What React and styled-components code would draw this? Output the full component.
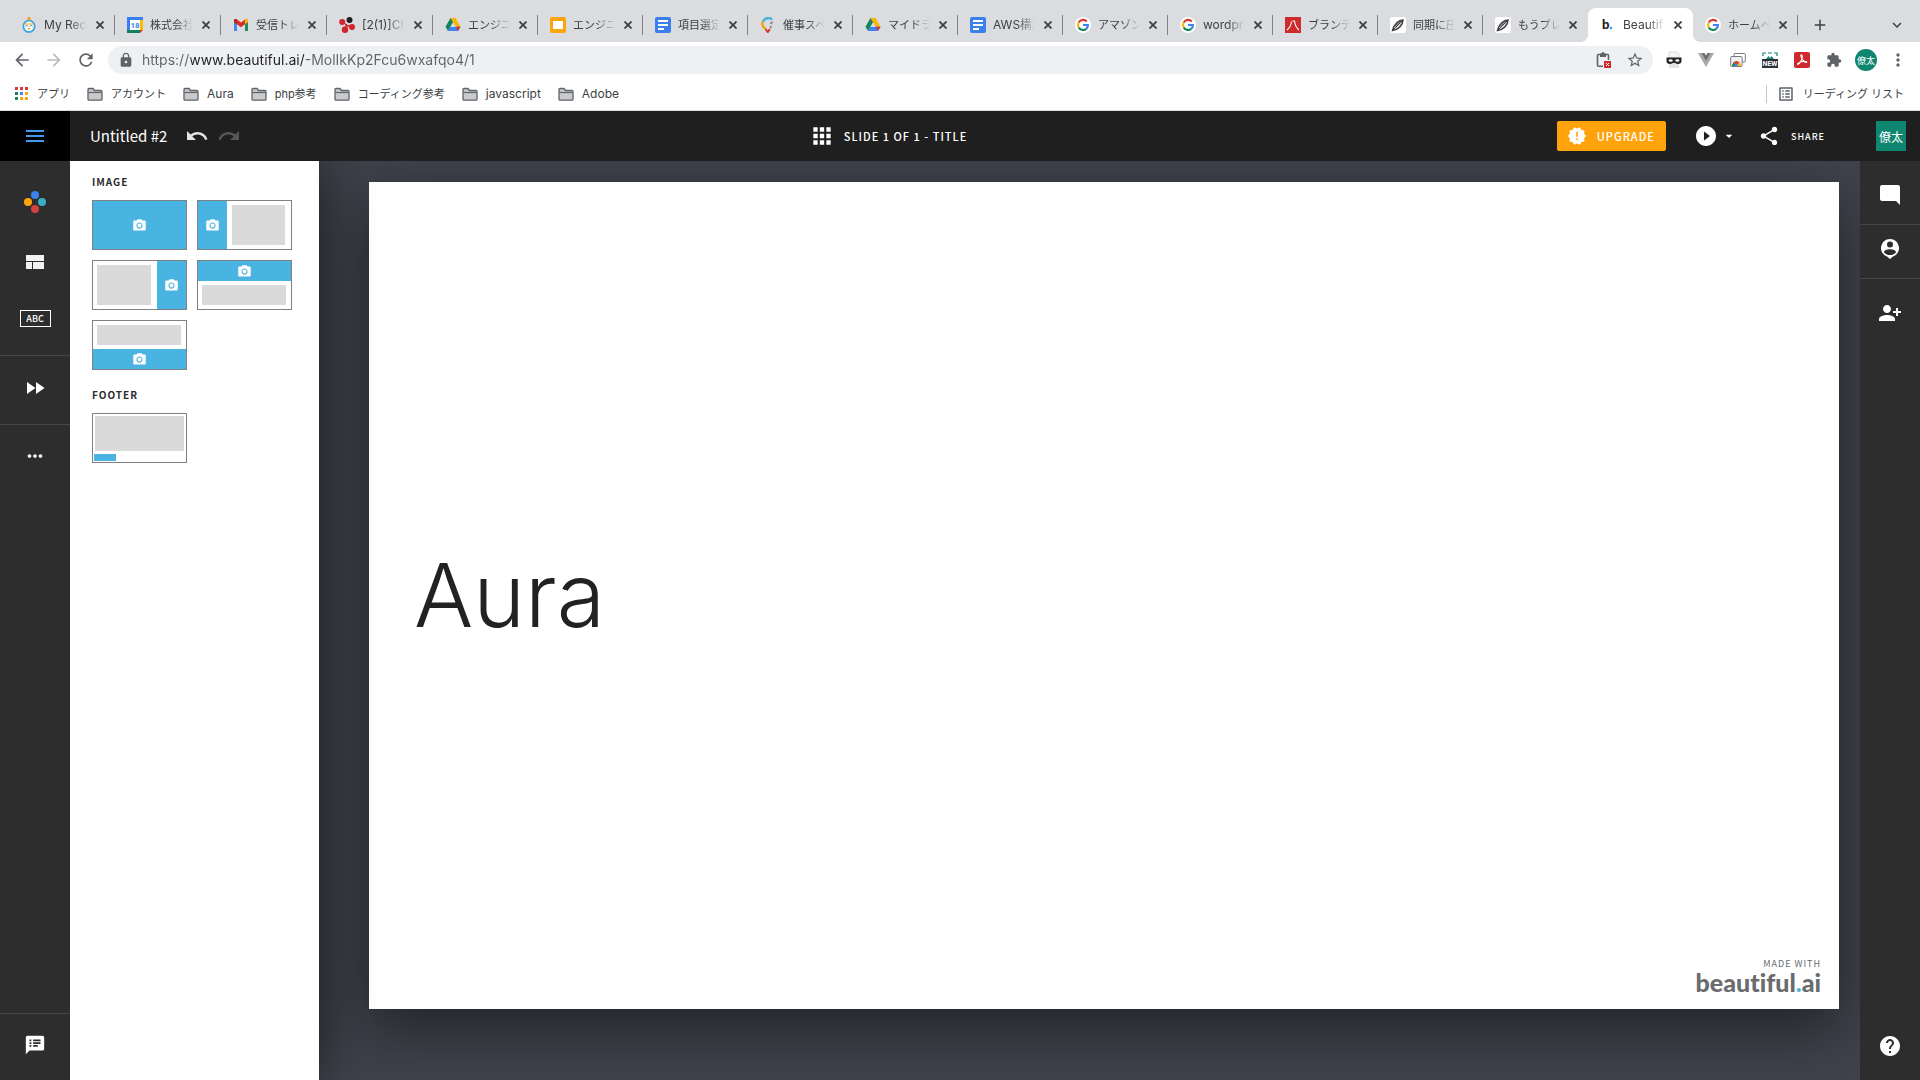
import React from 'react'
import styled, { createGlobalStyle, css } from 'styled-components'
import {
  MdAdd,
  MdApps,
  MdArrowBack,
  MdArrowDropDown,
  MdArrowForward,
  MdCameraAlt,
  MdExtension,
  MdFastForward,
  MdHelp,
  MdKeyboardArrowDown,
  MdListAlt,
  MdLock,
  MdMenu,
  MdModeComment,
  MdMoreHoriz,
  MdMoreVert,
  MdNewReleases,
  MdPersonAddAlt1,
  MdPlayCircleFilled,
  MdRedo,
  MdRefresh,
  MdShare,
  MdSpeakerNotes,
  MdStarBorder,
  MdUndo,
} from 'react-icons/md'

const colors = {
  strip: '#dadce0',
  chromeText: '#3c4043',
  chromeIcon: '#5f6368',
  omnibox: '#eff0f3',
  header: '#1f1f1f',
  sidebar: '#2d2d2d',
  divider: '#444548',
  canvas: '#40434c',
  blue: '#49b3e2',
  block: '#dadada',
  orange: '#ffa30d',
  teal: '#0f866f',
}

const uiFont = '"Inter", "Noto Sans CJK JP", sans-serif'
const appFont = '"Noto Sans CJK JP", "Noto Sans", sans-serif'

const GlobalStyle = createGlobalStyle`
  *, *::before, *::after {
    box-sizing: border-box;
  }

  body {
    margin: 0;
    font-family: ${appFont};
  }

  button {
    background: none;
    border: none;
    color: inherit;
    cursor: pointer;
    font: inherit;
    padding: 0;
  }

  svg {
    display: block;
    flex: none;
  }
`

const Page = styled.div`
  display: flex;
  flex-direction: column;
  height: 100vh;
  overflow: hidden;
`

/* Browser window */

const TabStrip = styled.div`
  align-items: flex-end;
  background-color: ${colors.strip};
  color: ${colors.chromeText};
  display: flex;
  font-family: ${uiFont};
  height: 42px;
  padding: 8px 14px 0 9px;
`

const TabList = styled.div`
  display: flex;
  flex: 0 1 1789px;
  min-width: 0;
`

const Tab = styled.div`
  align-items: center;
  display: flex;
  flex: 0 1 ${props => (props.$wide ? 106 : 105)}px;
  height: 34px;
  min-width: 0;
  padding: 0 7px 0 12px;
  position: relative;

  ${props =>
    props.$divider &&
    css`
      &::after {
        background-color: #808286;
        content: '';
        height: 20px;
        position: absolute;
        right: 0;
        top: 7px;
        width: 1px;
      }
    `};

  ${props =>
    props.$active &&
    css`
      background-color: #fff;
      border-radius: 8px 8px 0 0;

      &::before,
      &::after {
        bottom: 0;
        content: '';
        height: 8px;
        position: absolute;
        width: 8px;
      }

      &::before {
        background: radial-gradient(circle at 0 0, transparent 8px, #fff 8px);
        left: -8px;
      }

      &::after {
        background: radial-gradient(circle at 100% 0, transparent 8px, #fff 8px);
        right: -8px;
      }
    `};
`

const TabTitle = styled.span`
  flex: 1;
  font-size: ${props => (props.$latin ? 12 : 11)}px;
  line-height: 18px;
  margin: 0 5px 0 7px;
  mask-image: linear-gradient(to right, #000 calc(100% - 18px), transparent 100%);
  min-width: 0;
  white-space: nowrap;
`

const IconButton = styled.button`
  align-items: center;
  color: ${props => props.$color || colors.chromeIcon};
  display: flex;
  flex: none;
  height: ${props => props.$size || 32}px;
  justify-content: center;
  width: ${props => props.$size || 32}px;
`

const StripActions = styled.div`
  align-items: center;
  display: flex;
  flex: 1;
  height: 34px;
  justify-content: space-between;
  padding-left: 10px;
`

const Toolbar = styled.div`
  align-items: center;
  background-color: #fff;
  display: flex;
  height: 36px;
  padding: 0 6px;
`

const Omnibox = styled.label`
  align-items: center;
  background-color: ${colors.omnibox};
  border-radius: 14px;
  color: ${colors.chromeIcon};
  display: flex;
  flex: 1;
  height: 28px;
  margin: 0 5px 0 6px;
  padding: 0 2px 0 10px;
`

const Address = styled.input`
  background: linear-gradient(
    to right,
    #5f6368 49px,
    #202124 49px,
    #202124 162px,
    #5f6368 162px
  );
  background-clip: text;
  border: none;
  color: transparent;
  flex: 1;
  font-family: ${uiFont};
  font-size: 14px;
  line-height: 20px;
  margin-left: 8px;
  min-width: 0;
  outline: none;
  padding: 0;
`

const Profile = styled.span`
  align-items: center;
  background-color: ${colors.teal};
  border-radius: 50%;
  color: #fff;
  display: flex;
  font-family: ${appFont};
  font-size: 9px;
  height: 22px;
  justify-content: center;
  width: 22px;
`

const BookmarkBar = styled.nav`
  align-items: center;
  background-color: #fff;
  border-bottom: 1px solid ${colors.strip};
  display: flex;
  font-family: ${uiFont};
  gap: 17px;
  height: 33px;
  padding: 0 16px 0 15px;
`

const Bookmark = styled.a`
  align-items: center;
  color: ${colors.chromeText};
  display: flex;
  font-size: ${props => (props.$latin ? 12 : 11)}px;
  gap: 8px;
  line-height: 18px;
  text-decoration: none;
  white-space: nowrap;
`

const ReadingList = styled(Bookmark)`
  border-left: 1px solid #c4c6c9;
  margin-left: auto;
  padding-left: 10px;
`

/* Editor */

const Header = styled.header`
  align-items: center;
  background-color: ${colors.header};
  color: #fff;
  display: flex;
  flex: none;
  height: 50px;
  justify-content: space-between;
`

const HeaderGroup = styled.div`
  align-items: center;
  display: flex;
`

const MenuButton = styled.button`
  align-items: center;
  background-color: #000;
  color: #3f9bee;
  display: flex;
  height: 50px;
  justify-content: center;
  width: 70px;
`

const DocTitle = styled.h1`
  font-size: 15px;
  font-weight: 400;
  line-height: 20px;
  margin: 0 18px 0 20px;
`

const HistoryButton = styled.button`
  color: ${props => (props.disabled ? '#55575b' : '#e4e4e4')};

  & + & {
    margin-left: 8px;
  }
`

const SlideButton = styled.button`
  align-items: center;
  display: flex;
  font-size: 11px;
  font-weight: 500;
  gap: 9px;
  letter-spacing: 1px;
  margin-right: 22px;
`

const UpgradeButton = styled.button`
  align-items: center;
  background-color: ${colors.orange};
  border-radius: 2px;
  display: flex;
  font-size: 11px;
  font-weight: 500;
  gap: 10px;
  height: 30px;
  letter-spacing: 1px;
  margin-right: 28px;
  padding: 0 11px 0 10px;
`

const PlayButton = styled.button`
  align-items: center;
  display: flex;
  gap: 3px;
  margin-right: 21px;
`

const ShareButton = styled.button`
  align-items: center;
  display: flex;
  font-size: 9px;
  font-weight: 500;
  gap: 11px;
  letter-spacing: 1px;
  margin-right: 51px;
`

const Avatar = styled.button`
  background-color: ${colors.teal};
  font-size: 12px;
  height: 30px;
  margin-right: 14px;
  width: 30px;
`

const Workspace = styled.div`
  display: flex;
  flex: 1;
  min-height: 0;
  overflow: hidden;
`

const SideBar = styled.aside`
  background-color: ${colors.sidebar};
  color: #fff;
  display: flex;
  flex: none;
  flex-direction: column;
  position: relative;
  width: ${props => props.$width}px;
  z-index: 2;
`

const SideButton = styled.button`
  align-items: center;
  border-bottom: ${props => (props.$line ? `1px solid ${colors.divider}` : 'none')};
  display: flex;
  flex: none;
  height: ${props => props.$height}px;
  justify-content: center;
  padding: ${props => props.$padding || 0};
`

const SideFooter = styled.div`
  border-top: ${props => (props.$line ? `1px solid ${colors.divider}` : 'none')};
  display: grid;
  margin-top: auto;
`

const AbcBadge = styled.span`
  border: 1px solid #fff;
  font-size: 9px;
  font-weight: 500;
  line-height: 15px;
  text-align: center;
  width: 31px;
`

const Panel = styled.section`
  background-color: #fff;
  box-shadow: 0 0 50px rgba(0, 0, 0, 0.6);
  flex: none;
  padding: 12px 22px;
  position: relative;
  width: 249px;
  z-index: 1;
`

const PanelTitle = styled.h2`
  color: #2b2b2d;
  font-size: 10px;
  font-weight: 700;
  letter-spacing: 1px;
  line-height: 17px;
  margin: 0 0 10px;
`

const ThumbGrid = styled.div`
  display: grid;
  gap: 10px;
  grid-template-columns: 95px 95px;
  margin-bottom: 16px;
`

const Thumb = styled.button`
  align-items: stretch;
  background-color: #fff;
  border: 1px solid #808080;
  display: flex;
  flex-direction: ${props => props.$direction || 'row'};
  height: 50px;
`

const ImageArea = styled.span`
  align-items: center;
  background-color: ${colors.blue};
  color: #fff;
  display: flex;
  flex: ${props => (props.$size ? `0 0 ${props.$size}px` : '1')};
  justify-content: center;
`

const ContentArea = styled.span`
  background-color: ${colors.block};
  flex: 1;
  margin: ${props => props.$margin};
`

const FooterMark = styled.span`
  background-color: ${colors.blue};
  height: 7px;
  margin: 0 0 1px 1px;
  width: 22px;
`

const Canvas = styled.main`
  background-color: ${colors.canvas};
  flex: 1;
  min-width: 0;
  padding: 21px 21px 0 50px;
`

const Slide = styled.article`
  aspect-ratio: 16 / 9;
  background-color: #fff;
  box-shadow: 0 20px 60px rgba(0, 0, 0, 0.5);
  display: grid;
  grid-template-rows: 1fr auto 1fr;
  padding: 0 18px 0 45px;
`

const SlideTitle = styled.h2`
  color: #222;
  font-family: 'Inter', sans-serif;
  font-size: 88px;
  font-weight: 300;
  grid-row: 2;
  line-height: 108px;
  margin: 0;
`

const MadeWith = styled.footer`
  align-self: end;
  color: #6a6b6d;
  font-size: 9px;
  font-weight: 400;
  grid-row: 3;
  letter-spacing: 1px;
  line-height: 12px;
  padding-bottom: 15px;
  text-align: right;
`

const Brand = styled.div`
  font-family: 'Lato', sans-serif;
  font-size: 25px;
  font-variant-ligatures: none;
  font-weight: 900;
  letter-spacing: 0;
  line-height: 24px;

  span {
    color: ${colors.blue};
  }
`

/* Drawings */

const Icon16 = ({ children }) => (
  <svg width="16" height="16" viewBox="0 0 16 16" aria-hidden="true">
    {children}
  </svg>
)

const BirdIcon = () => (
  <Icon16>
    <circle cx="8" cy="9.3" r="5.700" fill="#fff" stroke="#3aa9dc" strokeWidth="1.800" />
    <circle cx="8" cy="1.800" r="1.800" fill="#f59e1f" />
    <path d="M3.500 7h9" stroke="#f5a623" strokeWidth="1" />
    <path d="M4.500 9.500l1.300-1.300L7 9.500M9 9.500l1.200-1.300 1.300 1.300" fill="none" stroke="#2b6f94" strokeWidth="0.900" />
    <path d="M6 11h4l-2 2z" fill="#f5a623" />
  </Icon16>
)

const CalendarIcon = () => (
  <Icon16>
    <path d="M0 0h16v12l-4 4H0z" fill="#3b7fee" />
    <path d="M13 3h3v10h-3z" fill="#fbbc04" />
    <path d="M0 13h13v3H0z" fill="#12825a" />
    <path d="M13 13h3l-3 3z" fill="#d93025" />
    <path d="M3 3h10v10H3z" fill="#fff" />
    <text x="8" y="11" textAnchor="middle" fontFamily="Roboto, sans-serif" fontSize="8" fontWeight="700" fill="#3b7fee">
      18
    </text>
  </Icon16>
)

const GmailIcon = () => (
  <Icon16>
    <path d="M1 4v10h3V6.200z" fill="#4285f4" />
    <path d="M15 4v10h-3V6.200z" fill="#1e8e5a" />
    <path d="M1 3.500C1 2 2.800 1.600 4 2.500l4 3 4-3c1.200-.9 3-.5 3 1V5L8 10.200 1 5z" fill="#d93025" />
    <path d="M12 2.500c1.200-.9 3-.5 3 1V5l-3 2.200z" fill="#fbbc04" />
    <path d="M1 3.500V5l3 2.200V2.500C2.800 1.600 1 2 1 3.500z" fill="#b3261e" />
  </Icon16>
)

const ChatworkIcon = () => (
  <Icon16>
    <circle cx="10.500" cy="3" r="3" fill="#1f1f1f" />
    <circle cx="3.200" cy="5" r="3" fill="#d3242b" />
    <circle cx="6" cy="12.700" r="3.200" fill="#d3242b" />
    <circle cx="13" cy="10" r="3" fill="#d3242b" />
    <path d="M4 5l4 3 5 2-5-1-2 4 1-5z" fill="#d3242b" stroke="#d3242b" />
  </Icon16>
)

const DriveIcon = () => (
  <Icon16>
    <path d="M5.500 1h5L8 5.400 3 14 .5 9.800z" fill="#12855c" />
    <path d="M10.500 1l5 8.800h-5L5.500 1z" fill="#fbb504" />
    <path d="M5.300 9.800h10.200L13 14H3z" fill="#3f83f1" />
    <path d="M11 9.800h4.500L13 14z" fill="#d93025" />
    <path d="M8 5.400l2.500 4.400h-5z" fill="#dadce0" />
  </Icon16>
)

const SlidesIcon = () => (
  <Icon16>
    <rect width="16" height="16" rx="2" fill="#fba60d" />
    <rect x="3" y="4" width="10" height="8" fill="#fff" />
  </Icon16>
)

const DocsIcon = () => (
  <Icon16>
    <rect width="16" height="16" rx="2" fill="#3b7fee" />
    <path d="M3 4h10M3 8h10M3 12h6" stroke="#fff" strokeWidth="1.800" />
  </Icon16>
)

const PinIcon = () => (
  <Icon16>
    <path d="M3 5a5.500 5.500 0 0 1 9-2.500" fill="none" stroke="#45b4dd" strokeWidth="2.400" />
    <path d="M2.600 4.500C1.500 8 3 10.500 6 12" fill="none" stroke="#f7a416" strokeWidth="2.400" />
    <path d="M5.500 12l2.300 3 2.200-3" fill="none" stroke="#d3362d" strokeWidth="2" />
    <path d="M10 10.500l2-1.500M10.500 6.500l2.500-1.500" stroke="#5f6368" strokeWidth="1.800" strokeDasharray="1.500 0.800" />
  </Icon16>
)

const GoogleIcon = () => (
  <Icon16>
    <circle cx="8" cy="8" r="8" fill="#fff" />
    <path d="M11.800 4.600A5 5 0 0 0 3.700 5.500" fill="none" stroke="#dc3a2d" strokeWidth="2.200" />
    <path d="M3.700 5.500a5 5 0 0 0 0 5" fill="none" stroke="#fbb50a" strokeWidth="2.200" />
    <path d="M3.700 10.500a5 5 0 0 0 7.600 1.300" fill="none" stroke="#15855b" strokeWidth="2.200" />
    <path d="M8 8h4.900a5 5 0 0 1-1.600 3.800" fill="none" stroke="#3f83f1" strokeWidth="2.200" />
  </Icon16>
)

const EightIcon = () => (
  <Icon16>
    <rect width="16" height="16" fill="#cf2a2e" />
    <path d="M6.500 4.500C6 8.500 4.500 11 2 13M7.500 4h2c.5 4.500 2 7 4.500 9" fill="none" stroke="#fff" strokeWidth="1.100" />
  </Icon16>
)

const FeatherIcon = () => (
  <Icon16>
    <rect width="16" height="16" rx="2" fill="#fff" />
    <path d="M13 3C9 3 4 7 2.500 13.500 8 13 13 8 13 3z" fill="#e2e2e2" stroke="#3c3c3c" strokeWidth="1.500" />
    <path d="M13 3L3 13M11 3.500l-6 6" stroke="#3c3c3c" strokeWidth="1" />
  </Icon16>
)

const BeautifulIcon = () => (
  <Icon16>
    <text x="2" y="12" fontFamily="Lato, sans-serif" fontSize="13" fontWeight="900" fill="#1b1b1b">
      b
    </text>
    <circle cx="11" cy="11" r="1.200" fill="#2f8cf0" />
  </Icon16>
)

const CloseIcon = () => (
  <svg width="8" height="8" viewBox="0 0 8 8" aria-hidden="true">
    <path d="M0.500 0.500l7 7M7.500 0.500l-7 7" stroke="currentColor" strokeWidth="1.800" />
  </svg>
)

const FolderIcon = () => (
  <Icon16>
    <path
      d="M1 13.200V3.500c0-.6.400-1 1-1h4l1.500 2H14c.6 0 1 .4 1 1v7.700c0 .6-.4 1-1 1H2c-.6 0-1-.4-1-1z"
      fill="#c9cacc"
      stroke="#5f6368"
      strokeWidth="1.300"
    />
    <path d="M1.500 6.500h13" stroke="#5f6368" strokeWidth="1.200" />
  </Icon16>
)

const AppsGridIcon = () => (
  <svg width="14" height="14" viewBox="0 0 14 14" aria-hidden="true">
    <path d="M0 0h3v3H0zM5 0h3v3H5zM10 0h3v3h-3z" fill="#d33b30" />
    <path d="M0 5h3v3H0zM0 10h3v3H0z" fill="#15855b" />
    <path d="M5 5h3v3H5z" fill="#3f83f1" />
    <path d="M10 5h3v3h-3zM5 10h3v3H5zM10 10h3v3h-3z" fill="#fba60d" />
  </svg>
)

const ClipboardIcon = () => (
  <Icon16>
    <path d="M8 14.200H3.500c-.6 0-1-.4-1-1V3.500c0-.6.400-1 1-1h9c.6 0 1 .4 1 1V8" fill="none" stroke="#5f6368" strokeWidth="1.600" />
    <path d="M5 1.500h1.500a1.500 1.500 0 0 1 3 0H11V5H5z" fill="#5f6368" />
    <rect x="9" y="9" width="7" height="7" fill="#cf2a2e" />
    <path d="M11 11l3 3M14 11l-3 3" stroke="#fff" strokeWidth="1" />
  </Icon16>
)

const MaskIcon = () => (
  <svg width="16" height="18" viewBox="0 0 16 18" aria-hidden="true">
    <path d="M3 1h8l2 2v4H3z" fill="#f6f6f6" stroke="#c8c8c8" strokeWidth="0.600" />
    <path d="M3 12h10v5H3z" fill="#e4e4e4" />
    <path d="M.5 6.500h15V10c0 2-1.300 3-3.500 3s-3-1.200-4-1.200S6.200 13 4 13 .5 12 .5 10z" fill="#242424" />
    <ellipse cx="4.700" cy="9.500" rx="2" ry="1.200" fill="#fff" />
    <ellipse cx="11.300" cy="9.500" rx="2" ry="1.200" fill="#fff" />
  </svg>
)

const VueIcon = () => (
  <Icon16>
    <path d="M0 1h4l4 6.500L12 1h4L8 15z" fill="#a6a8aa" />
    <path d="M3.500 1h3L8 3.500 9.500 1h3L8 8.800z" fill="#6d7073" />
  </Icon16>
)

const ScreensIcon = () => (
  <Icon16>
    <rect x="4" y="1.500" width="11.300" height="8.500" rx="1" fill="#fff" stroke="#777a7e" strokeWidth="1" />
    <rect x="0.700" y="4.500" width="11.500" height="10" rx="1" fill="#f1f1f1" stroke="#777a7e" strokeWidth="1" />
    <path d="M2 14a4.500 4.500 0 0 1 1.700-3.500L6 12.500 5 14z" fill="#15855b" />
    <path d="M3.200 10.700a4.200 4.200 0 0 1 6.600 0L8 12H5z" fill="#dc3a2d" />
    <path d="M9.800 10.700A4.200 4.200 0 0 1 11 14H8l-.5-2z" fill="#fbb50a" />
    <circle cx="6.500" cy="13" r="1.400" fill="#3f83f1" />
  </Icon16>
)

const NewIcon = () => (
  <svg width="18" height="18" viewBox="0 0 18 18" aria-hidden="true">
    <path d="M2 5V2h3M7 2h4M13 2h3v3" fill="none" stroke="#15867a" strokeWidth="1.200" />
    <path d="M5 8l2.500-3L9 7l1.500-2L13 8z" fill="#15867a" />
    <rect x="1" y="8" width="16" height="9" fill="#2e3236" />
    <text x="9" y="15" textAnchor="middle" fontFamily="Roboto, sans-serif" fontSize="7" fontWeight="700" fill="#fff">
      NEW
    </text>
  </svg>
)

const PdfIcon = () => (
  <Icon16>
    <rect width="16" height="16" rx="2" fill="#d0282c" />
    <path
      d="M7.500 3c1.500 0 .8 3.500-.6 6.200S3.500 13 3.500 12s4-2.800 7-2.800 2.700 1.600 1.300 1.300S7.500 7 7 4.500 7.200 3 7.500 3z"
      fill="none"
      stroke="#fff"
      strokeWidth="1.100"
    />
  </Icon16>
)

const DotsIcon = () => (
  <svg width="24" height="24" viewBox="0 0 24 24" aria-hidden="true">
    <circle cx="12" cy="5" r="4" fill="#3b82ec" />
    <circle cx="5" cy="12" r="4" fill="#ffa30d" />
    <circle cx="19" cy="12" r="4" fill="#37afc6" />
    <circle cx="12" cy="19" r="4" fill="#d5403f" />
  </svg>
)

const LayoutIcon = () => (
  <svg width="18" height="14" viewBox="0 0 18 14" aria-hidden="true">
    <path d="M0 0h18v6H0zM0 7h6v7H0zM7 7h11v7H7z" fill="#f1f1f1" />
  </svg>
)

const PersonPinIcon = () => (
  <svg width="18" height="20" viewBox="0 0 18 20" aria-hidden="true">
    <path
      d="M9 0a9 9 0 0 1 3 17.500L9 20l-3-2.500A9 9 0 0 1 9 0zm0 2.500a3 3 0 1 0 0 6 3 3 0 0 0 0-6zm0 7.800c-3 0-6 1.200-6 2.900 1.200 1.800 3.400 2.900 6 2.900s4.800-1.100 6-2.900c0-1.700-3-2.900-6-2.900z"
      fill="#fff"
      fillRule="evenodd"
    />
  </svg>
)

const tabs = [
  { title: 'My Rec', icon: BirdIcon, latin: true },
  { title: '株式会社', icon: CalendarIcon },
  { title: '受信トレ', icon: GmailIcon },
  { title: '[2(1)]Ch', icon: ChatworkIcon, latin: true },
  { title: 'エンジニ', icon: DriveIcon },
  { title: 'エンジニ', icon: SlidesIcon },
  { title: '項目選定', icon: DocsIcon },
  { title: '催事スペ', icon: PinIcon },
  { title: 'マイドラ', icon: DriveIcon },
  { title: 'AWS構成', icon: DocsIcon, latin: true },
  { title: 'アマゾン', icon: GoogleIcon },
  { title: 'wordpr', icon: GoogleIcon, latin: true },
  { title: 'ブランデ', icon: EightIcon },
  { title: '同期に圧', icon: FeatherIcon },
  { title: 'もうプレ', icon: FeatherIcon },
  { title: 'Beautif', icon: BeautifulIcon, latin: true, active: true },
  { title: 'ホームペ', icon: GoogleIcon },
]

const bookmarks = [
  { name: 'アカウント' },
  { name: 'Aura', latin: true },
  { name: 'php参考' },
  { name: 'コーディング参考' },
  { name: 'javascript', latin: true },
  { name: 'Adobe', latin: true },
]

const extensions = [
  { label: 'Privacy mask', icon: MaskIcon },
  { label: 'Vue devtools', icon: VueIcon },
  { label: 'Screens', icon: ScreensIcon },
  { label: 'Capture', icon: NewIcon },
  { label: 'PDF', icon: PdfIcon },
]

const hasDivider = index => {
  const next = tabs[index + 1]
  return !tabs[index].active && !(next && next.active)
}

const BrowserTabs = () => (
  <TabStrip>
    <TabList role="tablist">
      {tabs.map(({ title, icon: TabIcon, latin, active }, index) => (
        <Tab
          key={index}
          role="tab"
          aria-selected={!!active}
          $active={active}
          $divider={hasDivider(index)}
          $wide={index < 4}
        >
          <TabIcon />
          <TabTitle $latin={latin}>{title}</TabTitle>
          <IconButton $size={16} $color={colors.chromeText} aria-label="Close tab">
            <CloseIcon />
          </IconButton>
        </Tab>
      ))}
    </TabList>
    <StripActions>
      <IconButton $size={24} $color={colors.chromeText} aria-label="New tab">
        <MdAdd size={18} />
      </IconButton>
      <IconButton $size={18} $color={colors.chromeText} aria-label="Search tabs">
        <MdKeyboardArrowDown size={18} />
      </IconButton>
    </StripActions>
  </TabStrip>
)

class AddressBar extends React.Component {
  state = { value: 'https://www.beautiful.ai/-MolIkKp2Fcu6wxafqo4/1' }

  handleChange = event => this.setState({ value: event.target.value })

  render() {
    return (
      <Omnibox>
        <MdLock size={16} />
        <Address
          type="text"
          aria-label="Address"
          value={this.state.value}
          onChange={this.handleChange}
        />
        <IconButton aria-label="Clipboard access">
          <ClipboardIcon />
        </IconButton>
        <IconButton aria-label="Bookmark this page">
          <MdStarBorder size={18} />
        </IconButton>
      </Omnibox>
    )
  }
}

const BrowserToolbar = () => (
  <Toolbar>
    <IconButton aria-label="Back">
      <MdArrowBack size={20} />
    </IconButton>
    <IconButton $color="#babcbe" aria-label="Forward">
      <MdArrowForward size={20} />
    </IconButton>
    <IconButton aria-label="Reload">
      <MdRefresh size={20} />
    </IconButton>
    <AddressBar />
    {extensions.map(({ label, icon: ExtensionIcon }) => (
      <IconButton key={label} aria-label={label}>
        <ExtensionIcon />
      </IconButton>
    ))}
    <IconButton aria-label="Extensions">
      <MdExtension size={16} />
    </IconButton>
    <IconButton aria-label="Profile">
      <Profile>僚太</Profile>
    </IconButton>
    <IconButton aria-label="Browser menu">
      <MdMoreVert size={20} />
    </IconButton>
  </Toolbar>
)

const Bookmarks = () => (
  <BookmarkBar>
    <Bookmark href="#apps">
      <AppsGridIcon />
      アプリ
    </Bookmark>
    {bookmarks.map(({ name, latin }) => (
      <Bookmark key={name} href={`#${name}`} $latin={latin}>
        <FolderIcon />
        {name}
      </Bookmark>
    ))}
    <ReadingList href="#reading-list">
      <MdListAlt size={18} color={colors.chromeIcon} />
      リーディング リスト
    </ReadingList>
  </BookmarkBar>
)

const EditorHeader = () => (
  <Header>
    <HeaderGroup>
      <MenuButton aria-label="Menu">
        <MdMenu size={24} />
      </MenuButton>
      <DocTitle>Untitled #2</DocTitle>
      <HistoryButton aria-label="Undo">
        <MdUndo size={24} />
      </HistoryButton>
      <HistoryButton aria-label="Redo" disabled>
        <MdRedo size={24} />
      </HistoryButton>
    </HeaderGroup>
    <SlideButton>
      <MdApps size={26} />
      SLIDE 1 OF 1 - TITLE
    </SlideButton>
    <HeaderGroup>
      <UpgradeButton>
        <MdNewReleases size={20} />
        UPGRADE
      </UpgradeButton>
      <PlayButton aria-label="Play">
        <MdPlayCircleFilled size={24} />
        <MdArrowDropDown size={16} />
      </PlayButton>
      <ShareButton>
        <MdShare size={22} />
        SHARE
      </ShareButton>
      <Avatar>僚太</Avatar>
    </HeaderGroup>
  </Header>
)

const LayoutPanel = () => (
  <Panel>
    <PanelTitle>IMAGE</PanelTitle>
    <ThumbGrid>
      <Thumb aria-label="Full image">
        <ImageArea>
          <MdCameraAlt size={15} />
        </ImageArea>
      </Thumb>
      <Thumb aria-label="Image left">
        <ImageArea $size={29}>
          <MdCameraAlt size={15} />
        </ImageArea>
        <ContentArea $margin="4px 6px 4px 5px" />
      </Thumb>
      <Thumb aria-label="Image right">
        <ContentArea $margin="4px 6px 4px 4px" />
        <ImageArea $size={29}>
          <MdCameraAlt size={15} />
        </ImageArea>
      </Thumb>
      <Thumb $direction="column" aria-label="Image top">
        <ImageArea $size={20}>
          <MdCameraAlt size={15} />
        </ImageArea>
        <ContentArea $margin="4px 5px 4px 4px" />
      </Thumb>
      <Thumb $direction="column" aria-label="Image bottom">
        <ContentArea $margin="4px 5px 4px 4px" />
        <ImageArea $size={20}>
          <MdCameraAlt size={15} />
        </ImageArea>
      </Thumb>
    </ThumbGrid>
    <PanelTitle>FOOTER</PanelTitle>
    <ThumbGrid>
      <Thumb $direction="column" aria-label="Footer">
        <ContentArea $margin="2px 2px 3px 2px" />
        <FooterMark />
      </Thumb>
    </ThumbGrid>
  </Panel>
)

const App = () => (
  <Page>
    <GlobalStyle />
    <BrowserTabs />
    <BrowserToolbar />
    <Bookmarks />
    <EditorHeader />
    <Workspace>
      <SideBar $width={70}>
        <SideButton $height={82} aria-label="Elements">
          <DotsIcon />
        </SideButton>
        <SideButton $height={38} aria-label="Layout">
          <LayoutIcon />
        </SideButton>
        <SideButton $height={75} $line>
          <AbcBadge>ABC</AbcBadge>
        </SideButton>
        <SideButton $height={69} $padding="0 0 4px" $line aria-label="Animate">
          <MdFastForward size={24} />
        </SideButton>
        <SideButton $height={62} aria-label="More">
          <MdMoreHoriz size={22} />
        </SideButton>
        <SideFooter $line>
          <SideButton $height={66} $padding="0 0 4px" aria-label="Speaker notes">
            <MdSpeakerNotes size={22} />
          </SideButton>
        </SideFooter>
      </SideBar>
      <LayoutPanel />
      <Canvas>
        <Slide>
          <SlideTitle>Aura</SlideTitle>
          <MadeWith>
            MADE WITH
            <Brand>
              beautiful<span>.</span>ai
            </Brand>
          </MadeWith>
        </Slide>
      </Canvas>
      <SideBar $width={60}>
        <SideButton $height={64} $padding="4px 0 0" $line aria-label="Comments">
          <MdModeComment size={24} />
        </SideButton>
        <SideButton $height={54} $padding="0 0 6px" $line aria-label="Assigned">
          <PersonPinIcon />
        </SideButton>
        <SideButton $height={68} aria-label="Invite">
          <MdPersonAddAlt1 size={24} />
        </SideButton>
        <SideFooter>
          <SideButton $height={68} aria-label="Help">
            <MdHelp size={24} />
          </SideButton>
        </SideFooter>
      </SideBar>
    </Workspace>
  </Page>
)

export default App
